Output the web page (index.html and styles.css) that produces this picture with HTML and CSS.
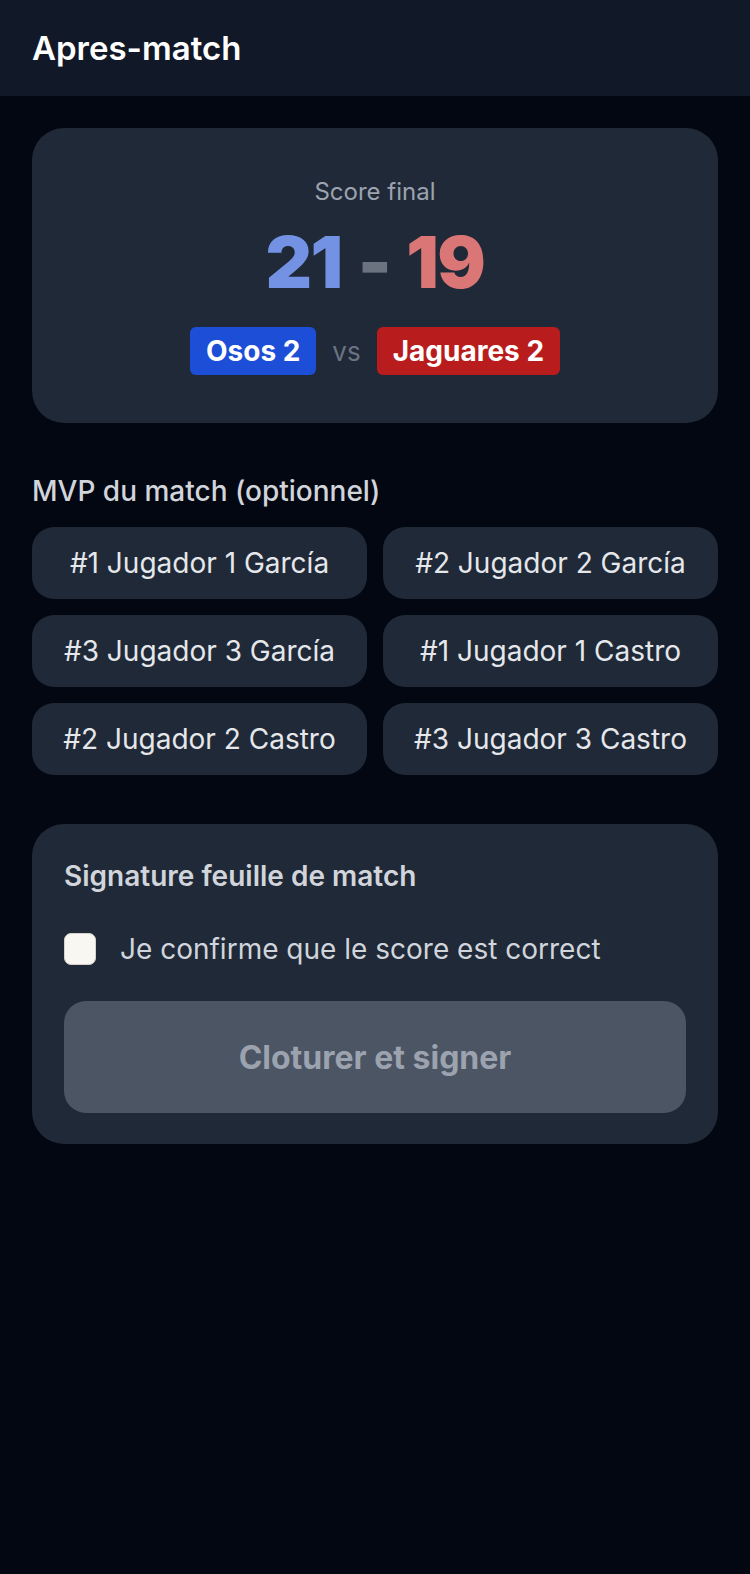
FILE: index.html
```html
<!DOCTYPE html>
<html lang="fr">
<head>
    <meta charset="UTF-8">
    <meta name="viewport" content="width=device-width, initial-scale=1.0">
    <title>Apres-match</title>
    <link rel="stylesheet" href="styles.css">
</head>
<body>
    <header class="topbar">
        <h1>Apres-match</h1>
    </header>

    <main class="content">
        <section class="score-card">
            <div class="score-label">Score final</div>
            <div class="score">
                <span class="score-home">21</span>
                <span class="score-dash">-</span>
                <span class="score-away">19</span>
            </div>
            <div class="teams">
                <span class="team team-home">Osos 2</span>
                <span class="vs">vs</span>
                <span class="team team-away">Jaguares 2</span>
            </div>
        </section>

        <section class="mvp">
            <h2>MVP du match (optionnel)</h2>
            <div class="mvp-grid">
                <button class="player">#1 Jugador 1 García</button>
                <button class="player">#2 Jugador 2 García</button>
                <button class="player">#3 Jugador 3 García</button>
                <button class="player">#1 Jugador 1 Castro</button>
                <button class="player">#2 Jugador 2 Castro</button>
                <button class="player">#3 Jugador 3 Castro</button>
            </div>
        </section>

        <section class="sign-card">
            <h2>Signature feuille de match</h2>
            <label class="confirm">
                <input type="checkbox" id="confirmScore">
                <span>Je confirme que le score est correct</span>
            </label>
            <button class="submit" id="submitBtn" disabled>Cloturer et signer</button>
        </section>
    </main>

    <script>
        const box = document.getElementById('confirmScore');
        box.addEventListener('change', () => {
            document.getElementById('submitBtn').disabled = !box.checked;
        });
    </script>
</body>
</html>
```

FILE: styles.css
```css
* {
    box-sizing: border-box;
}

body {
    margin: 0;
    background-color: #030712;
    color: #f3f4f6;
    font-family: Inter, "Noto Sans", sans-serif;
}

.topbar {
    background-color: #111827;
    height: 96px;
    padding: 0 32px;
    display: flex;
    align-items: center;
}

.topbar h1 {
    margin: 0;
    font-size: 33px;
    font-weight: 600;
    color: #fff;
}

.content {
    padding: 32px;
}

.score-card {
    background-color: #1f2937;
    border-radius: 32px;
    padding: 48px 32px;
    text-align: center;
}

.score-label {
    font-size: 24px;
    line-height: 32px;
    color: #9ca3af;
}

.score {
    margin-top: 18px;
    font-size: 72px;
    line-height: 72px;
    font-weight: 900;
    letter-spacing: -1.5px;
    display: flex;
    justify-content: center;
    gap: 16px;
}

.score-home {
    color: #7392e3;
}

.score-dash {
    color: #6b7280;
}

.score-away {
    color: #db7676;
}

.teams {
    margin-top: 29px;
    display: flex;
    justify-content: center;
    align-items: center;
    gap: 16px;
}

.team {
    font-size: 28px;
    line-height: 32px;
    font-weight: 700;
    color: #fff;
    padding: 8px 16px;
    border-radius: 6px;
}

.team-home {
    background-color: #1d4ed8;
}

.team-away {
    background-color: #b91c1c;
}

.vs {
    font-size: 26px;
    color: #6b7280;
}

.mvp {
    margin-top: 48px;
}

.mvp h2 {
    margin: 0 0 16px;
    font-size: 28px;
    line-height: 40px;
    font-weight: 500;
    color: #d1d5db;
}

.mvp-grid {
    display: grid;
    grid-template-columns: 1fr 1fr;
    gap: 16px;
}

.player {
    height: 72px;
    border: none;
    border-radius: 22px;
    background-color: #1f2937;
    color: #e5e7eb;
    font-family: inherit;
    font-size: 28px;
    cursor: pointer;
}

.player:hover {
    background-color: #273444;
}

.sign-card {
    margin-top: 49px;
    background-color: #1f2937;
    border-radius: 32px;
    padding: 32px 32px 31px;
}

.sign-card h2 {
    margin: 0;
    font-size: 28px;
    line-height: 40px;
    font-weight: 600;
    color: #d1d5db;
}

.confirm {
    margin-top: 36px;
    display: flex;
    align-items: center;
    gap: 24px;
    font-size: 28px;
    line-height: 34px;
    color: #d1d5db;
    cursor: pointer;
}

.confirm input {
    appearance: none;
    width: 32px;
    height: 32px;
    margin: 0;
    border-radius: 7px;
    background-color: #f8f7f2;
    border: 1px solid #d6d3cc;
}

.confirm input:checked {
    background-color: #2563eb;
    border-color: #2563eb;
}

.submit {
    margin-top: 35px;
    width: 100%;
    height: 112px;
    border: none;
    border-radius: 22px;
    background-color: #4b5563;
    color: #9ca3af;
    font-family: inherit;
    font-size: 32px;
    font-weight: 700;
}

.submit:not(:disabled) {
    background-color: #2563eb;
    color: #fff;
    cursor: pointer;
}
```
